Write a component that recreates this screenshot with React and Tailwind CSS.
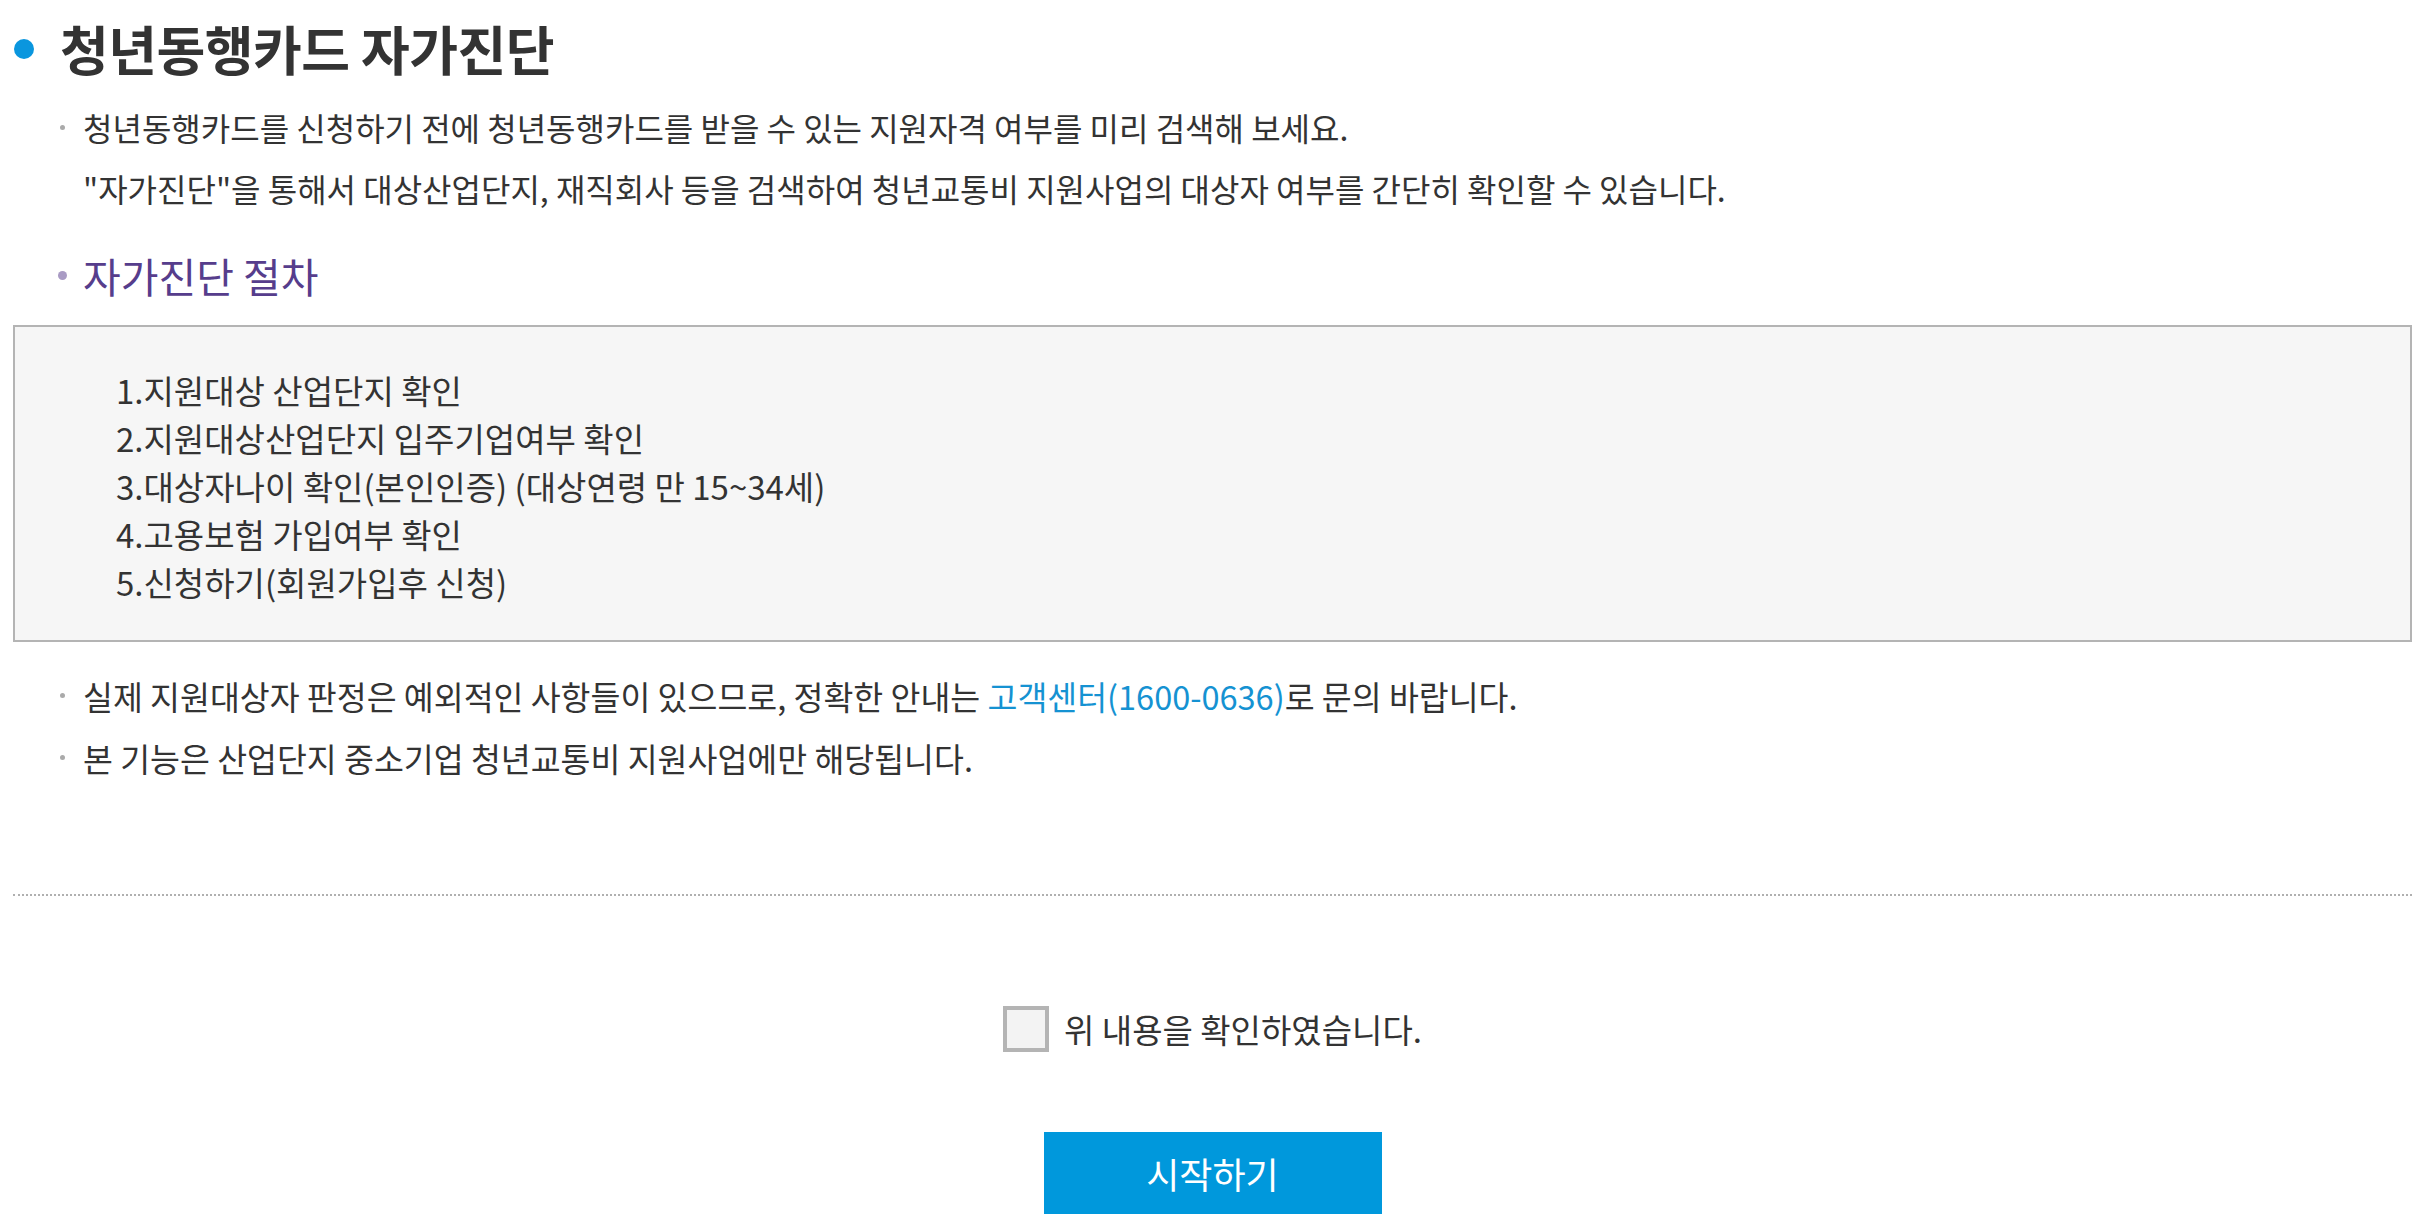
import React from 'react';

const steps = [
  '1.지원대상 산업단지 확인',
  '2.지원대상산업단지 입주기업여부 확인',
  '3.대상자나이 확인(본인인증) (대상연령 만 15~34세)',
  '4.고용보험 가입여부 확인',
  '5.신청하기(회원가입후 신청)',
];

const Dot = () => (
  <span className="absolute left-[-23px] top-[28px] w-[5px] h-[5px] rounded-full bg-[#aaaaaa]" />
);

const App = () => {
  return (
    <div
      className="min-h-screen bg-white px-[13px] text-[#333333]"
      style={{ fontFamily: '"Noto Sans CJK KR", "Noto Sans", sans-serif' }}
    >
      {/* title */}
      <div className="h-[97px] flex items-center">
        <span className="ml-px w-[20px] h-[20px] rounded-full bg-[#0a96de]" />
        <h1 className="ml-[26px] text-[53px] font-bold leading-none tracking-[-0.5px]">청년동행카드 자가진단</h1>
      </div>

      <div className="pl-[70px] text-[32px] leading-[61px]">
        <p className="relative">
          <Dot />
          청년동행카드를 신청하기 전에 청년동행카드를 받을 수 있는 지원자격 여부를 미리 검색해 보세요.
        </p>
        <p>"자가진단"을 통해서 대상산업단지, 재직회사 등을 검색하여 청년교통비 지원사업의 대상자 여부를 간단히 확인할 수 있습니다.</p>
      </div>

      <h2 className="mt-[26px] pl-[70px] relative text-[41px] leading-[60px] text-[#563d8c]">
        <span className="absolute left-[45px] top-[26px] w-[9px] h-[9px] rounded-full bg-[#a99bc4]" />
        자가진단 절차
      </h2>

      <div className="mt-[20px] border-2 border-[#b4b4b4] bg-[#f6f6f6] pl-[101px] pt-[39px] pb-[34px] text-[33px] leading-[48px]">
        {steps.map((s) => (
          <p key={s}>{s}</p>
        ))}
      </div>

      <div className="mt-[23px] pl-[70px] text-[32.5px] leading-[62px]">
        <p className="relative">
          <Dot />
          실제 지원대상자 판정은 예외적인 사항들이 있으므로, 정확한 안내는{' '}
          <span className="text-[#1592d2]">고객센터(1600-0636)</span>로 문의 바랍니다.
        </p>
        <p className="relative">
          <Dot />
          본 기능은 산업단지 중소기업 청년교통비 지원사업에만 해당됩니다.
        </p>
      </div>

      <div className="mt-[105px] border-t-2 border-dotted border-[#b0b0b0]" />

      <label className="mt-[110px] flex items-center justify-center gap-[15px] h-[46px] cursor-pointer">
        <span className="w-[46px] h-[46px] border-4 border-[#b4b4b4] bg-[#f3f3f3]" />
        <span className="text-[33px] leading-none">위 내용을 확인하였습니다.</span>
      </label>

      <div className="mt-[80px] flex justify-center">
        <button className="w-[338px] h-[82px] bg-[#0098dc] text-white text-[36px]">시작하기</button>
      </div>
    </div>
  );
};

export default App;
